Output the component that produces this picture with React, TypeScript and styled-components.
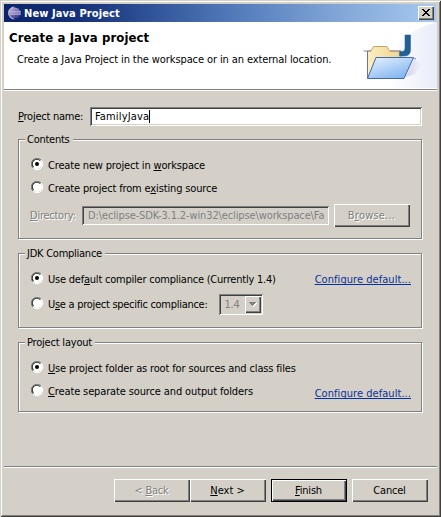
import React from "react";
import styled, { createGlobalStyle, css } from "styled-components";

const face = "#d4d0c8";

const GlobalStyle = createGlobalStyle`
  * { box-sizing: border-box; }
  body { margin: 0; background: ${face}; overflow: hidden; }
`;

const Dialog = styled.div`
  width: 441px;
  height: 517px;
  padding: 4px 4px 2px;
  background: ${face};
  display: flex;
  flex-direction: column;
  font: 11px/13px "DejaVu Sans Condensed", "DejaVu Sans", sans-serif;
  font-stretch: condensed;
  color: #000;
  white-space: pre;
  box-shadow: inset 1px 1px ${face}, inset -1px -1px #404040,
    inset 2px 2px #fff, inset -2px -2px #808080;
`;

const Label = styled.span<{ $track?: number; $disabled?: boolean }>`
  letter-spacing: ${(p) => p.$track ?? -0.25}px;
  ${(p) => p.$disabled && css`color: #808080; text-shadow: 1px 1px #fff;`}
  u { text-underline-offset: 1px; text-decoration-thickness: 1px; text-decoration-skip-ink: none; }
`;

const TitleBar = styled.div`
  height: 18px;
  width: 432px;
  display: flex;
  align-items: center;
  padding: 0 2px 0 3px;
  gap: 3px;
  color: #fff;
  font-weight: bold;
  background: linear-gradient(90deg, #0a246a 0%, #15327a 18%, #5078b8 52%, #86aada 80%, #a6caf0 100%);
`;

const CloseButton = styled.button`
  margin-left: auto;
  width: 16px;
  height: 14px;
  padding: 0 1px 1px 0;
  border: 0;
  display: flex;
  align-items: center;
  justify-content: center;
  background: ${face};
  box-shadow: inset 1px 1px #fff, inset -1px -1px #404040, inset -2px -2px #808080;
`;

const Header = styled.div`
  width: 433px;
  height: 69px;
  display: flex;
  justify-content: space-between;
  background: #fff;
  border-bottom: 1px solid #fff;
  box-shadow: inset 0 -1px #808080;
`;

const HeaderText = styled.div`
  padding: 8px 0 0 5px;
  width: 345px;
`;

const Heading = styled.div`
  font-size: 13px;
  line-height: 16px;
  font-weight: bold;
`;

const Description = styled.div`
  padding: 7px 0 0 8px;
`;

const Body = styled.div`
  height: 375px;
  padding: 16px 14px 0;
  display: flex;
  flex-direction: column;
`;

const NameRow = styled.div`
  display: flex;
  align-items: center;
  height: 19px;
  margin-bottom: 13px;
`;

const NameLabel = styled.div`
  width: 72px;
`;

const Field = styled.div<{ $width: number; $disabled?: boolean }>`
  width: ${(p) => p.$width}px;
  height: 19px;
  padding: 3px 4px 3px ${(p) => (p.$disabled ? 6 : 5)}px;
  display: flex;
  overflow: hidden;
  background: ${(p) => (p.$disabled ? face : "#fff")};
  color: ${(p) => (p.$disabled ? "#808080" : "#000")};
  box-shadow: inset 1px 1px #808080, inset -1px -1px #fff, inset 2px 2px #404040,
    inset -2px -2px ${face};
`;

const FieldClip = styled.div`
  overflow: hidden;
`;

const Caret = styled.i`
  width: 1px;
  height: 13px;
  background: #000;
`;

const Group = styled.section<{ $height: number }>`
  position: relative;
  width: 404px;
  height: ${(p) => p.$height}px;
  margin-bottom: 14px;
  padding: 14px 10px 0 12px;
  border: 1px solid #808080;
  box-shadow: inset 1px 1px #fff, 1px 1px #fff;
`;

const Legend = styled.div`
  position: absolute;
  left: 6px;
  top: -7px;
  padding: 0 3px 0 2px;
  background: ${face};
`;

const Row = styled.div<{ $height: number }>`
  height: ${(p) => p.$height}px;
  display: flex;
  align-items: center;
`;

const Option = styled.label`
  display: flex;
  align-items: center;
  gap: 4px;
`;

const RadioMark = styled.svg`
  width: 13px;
  height: 13px;
  margin-bottom: 2px;
`;

const DirectoryLabel = styled.div`
  width: 52px;
  margin-left: -1px;
`;

const DirectoryRow = styled.div`
  height: 23px;
  margin-top: 4px;
  display: flex;
  align-items: center;
`;

const Button = styled.button<{ $default?: boolean }>`
  width: 76px;
  height: 23px;
  padding: 0 1px 1px 0;
  border: 0;
  flex: none;
  font: inherit;
  color: #000;
  background: ${face};
  box-shadow: ${(p) =>
    p.$default
      ? "inset 0 0 0 1px #000, inset 2px 2px #fff, inset -2px -2px #404040, inset -3px -3px #808080"
      : "inset 1px 1px #fff, inset -1px -1px #404040, inset -2px -2px #808080"};
`;

const BrowseButton = styled(Button)`
  margin-left: 5px;
`;

const Link = styled.a<{ $drop?: number }>`
  margin-left: auto;
  position: relative;
  top: ${(p) => p.$drop ?? 0}px;
  color: #0a309c;
  text-decoration: underline;
  text-decoration-skip-ink: none;
`;

const Combo = styled.div`
  margin-left: 12px;
  width: 44px;
  height: 21px;
  padding: 2px 2px 2px 5px;
  display: flex;
  align-items: center;
  justify-content: space-between;
  color: #808080;
  box-shadow: inset 1px 1px #808080, inset -1px -1px #fff, inset 2px 2px #404040,
    inset -2px -2px ${face};
`;

const ComboArrow = styled.div`
  width: 16px;
  height: 17px;
  display: flex;
  align-items: center;
  justify-content: center;
  background: ${face};
  box-shadow: inset 1px 1px #fff, inset -1px -1px #404040, inset -2px -2px #808080;
`;

const Footer = styled.footer`
  width: 433px;
  border-top: 1px solid #808080;
  box-shadow: inset 0 1px #fff;
  padding: 12px 9px 0 0;
  height: 49px;
  display: flex;
  justify-content: flex-end;
  gap: 5px;
`;

const Pager = styled.div`
  display: flex;
`;

const Radio = ({ checked }: { checked?: boolean }) => (
  <RadioMark viewBox="0 0 13 13">
    <circle cx="6" cy="6" r="5" fill="#fff" />
    <path d="M10.1 1.9A5.6 5.6 0 0 1 1.9 10.1" fill="none" stroke="#fff" />
    <path d="M1.9 10.1A5.6 5.6 0 0 1 10.1 1.9" fill="none" stroke="#808080" />
    <path d="M2.6 9.2A4.6 4.6 0 0 1 9.2 2.6" fill="none" stroke="#303030" strokeWidth="1.1" />
    {checked && <circle cx="6" cy="6" r="2" fill="#000" />}
  </RadioMark>
);

const EclipseLogo = () => (
  <svg width="14" height="14" viewBox="0 0 14 14">
    <defs>
      <linearGradient id="orb" x1="0" y1="0" x2="0.6" y2="1">
        <stop offset="0" stopColor="#c9bcdf" />
        <stop offset="0.5" stopColor="#7d76b4" />
        <stop offset="1" stopColor="#34388a" />
      </linearGradient>
    </defs>
    <path d="M7.5.5A6.5 6.5 0 0 0 7.5 13.5A10 10 0 0 1 7.5.5" fill="#c4b5d6" />
    <circle cx="8" cy="7" r="5.6" fill="url(#orb)" />
    <path d="M3 5.9H14M3 8.1H14" stroke="#d9d4ec" strokeWidth=".9" />
  </svg>
);

const FolderArt = () => (
  <svg width="88" height="67" viewBox="0 0 88 67">
    <defs>
      <linearGradient id="glow" x1="0" x2="1">
        <stop offset="0" stopColor="#fff" />
        <stop offset="1" stopColor="#dfe6f6" />
      </linearGradient>
      <linearGradient id="front" x1="0" y1="0" x2="0.7" y2="1">
        <stop offset="0" stopColor="#e9f4ff" />
        <stop offset="1" stopColor="#82b4f0" />
      </linearGradient>
      <linearGradient id="back" x1="0" x2="1">
        <stop offset="0" stopColor="#fbeec0" />
        <stop offset="1" stopColor="#efd58c" />
      </linearGradient>
      <linearGradient id="shade" x1="0" x2="1">
        <stop offset="0" stopColor="#b7b0dc" stopOpacity=".5" />
        <stop offset="1" stopColor="#b7b0dc" stopOpacity="0" />
      </linearGradient>
    </defs>
    <path d="M50 20Q67 5 88 0V66H40Z" fill="url(#glow)" opacity=".75" />
    <path d="M57 55L65 37 73 43 66 52Z" fill="url(#shade)" />
    <path d="M18.5 56V29H22L24.5 24.5H38L40.500 29H52V40L32 56Z" fill="url(#back)" stroke="#c7a36a" />
    <path d="M14.500 29H22M41 29H52" stroke="#8e8a91" />
    <path d="M18.500 29V56" stroke="#6972a0" />
    <path d="M56 13H61.500V28Q61.500 33.500 56 34H50.500V29.500H53Q56 29.500 56 26Z" fill="#245f94" stroke="#2e6c9d" strokeWidth=".6" />
    <path d="M27 35.500H64.500L55 56.500H18.500Z" fill="url(#front)" stroke="#4267ad" strokeLinejoin="round" />
    <path d="M63 35.500L67 37" stroke="#8088b3" />
  </svg>
);

export default function App() {
  return (
    <>
      <GlobalStyle />
      <Dialog>
        <TitleBar>
          <EclipseLogo />
          <Label $track={0.1}>New Java Project</Label>
          <CloseButton aria-label="Close">
            <svg width="8" height="7" viewBox="0 0 8 7" shapeRendering="crispEdges">
              <path d="M0 0h2v1h1v1h2V1h1V0h2v1H7v1H6v1H5v1h1v1h1v1h1v1H6V6H5V5H3v1H2v1H0V6h1V5h1V4h1V3H2V2H1V1H0z" />
            </svg>
          </CloseButton>
        </TitleBar>
        <Header>
          <HeaderText>
            <Heading><Label $track={0.1}>Create a Java project</Label></Heading>
            <Description><Label $track={-0.1}>Create a Java Project in the workspace or in an external location.</Label></Description>
          </HeaderText>
          <FolderArt />
        </Header>
        <Body>
          <NameRow>
            <NameLabel><Label><u>P</u>roject name:</Label></NameLabel>
            <Field $width={332}>
              <Label $track={0.15}>FamilyJava</Label>
              <Caret />
            </Field>
          </NameRow>
          <Group $height={100}>
            <Legend><Label>Contents</Label></Legend>
            <Row $height={23}>
              <Option><Radio checked /><Label $track={-0.17}>Create new project in <u>w</u>orkspace</Label></Option>
            </Row>
            <Row $height={23}>
              <Option><Radio /><Label $track={-0.15}>Create project from e<u>x</u>isting source</Label></Option>
            </Row>
            <DirectoryRow>
              <DirectoryLabel><Label $disabled><u>D</u>irectory:</Label></DirectoryLabel>
              <Field $width={247} $disabled>
                <FieldClip><Label $track={-0.12}>D:\eclipse-SDK-3.1.2-win32\eclipse\workspace\Fa</Label></FieldClip>
              </Field>
              <BrowseButton disabled><Label $disabled $track={0.2}>B<u>r</u>owse...</Label></BrowseButton>
            </DirectoryRow>
          </Group>
          <Group $height={75}>
            <Legend><Label>JDK Compliance</Label></Legend>
            <Row $height={23}>
              <Option><Radio checked /><Label $track={-0.22}>Use def<u>a</u>ult compiler compliance (Currently 1.4)</Label></Option>
              <Link><Label $track={0.05}>Configure default...</Label></Link>
            </Row>
            <Row $height={27}>
              <Option><Radio /><Label $track={-0.28}>U<u>s</u>e a project specific compliance:</Label></Option>
              <Combo>
                <Label>1.4</Label>
                <ComboArrow>
                  <svg width="8" height="5" viewBox="0 0 8 5" shapeRendering="crispEdges">
                    <path d="M1 1h7L4.5 5z" fill="#fff" />
                    <path d="M0 0h7L3.5 4z" fill="#808080" />
                  </svg>
                </ComboArrow>
              </Combo>
            </Row>
          </Group>
          <Group $height={70}>
            <Legend><Label $track={-0.2}>Project layout</Label></Legend>
            <Row $height={23}>
              <Option><Radio checked /><Label $track={-0.15}><u>U</u>se project folder as root for sources and class files</Label></Option>
            </Row>
            <Row $height={23}>
              <Option><Radio /><Label $track={-0.13}><u>C</u>reate separate source and output folders</Label></Option>
              <Link $drop={2}><Label $track={0.05}>Configure default...</Label></Link>
            </Row>
          </Group>
        </Body>
        <Footer>
          <Pager>
            <Button disabled><Label $disabled>&lt; <u>B</u>ack</Label></Button>
            <Button><Label $track={0}><u>N</u>ext &gt;</Label></Button>
          </Pager>
          <Button $default><Label $track={-0.2}><u>F</u>inish</Label></Button>
          <Button><Label $track={-0.2}>Cancel</Label></Button>
        </Footer>
      </Dialog>
    </>
  );
}
